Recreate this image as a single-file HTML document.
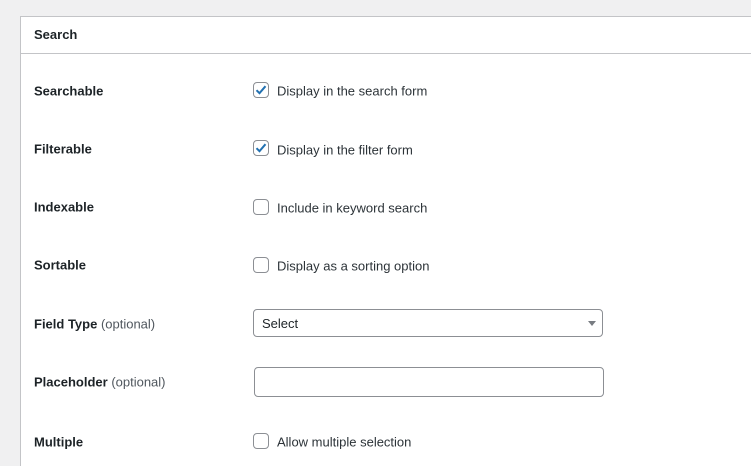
<!DOCTYPE html>
<html style="height:466px;overflow:hidden"><head><style>
body{margin:0;width:751px;height:466px;background:#f0f0f1;font-family:"Liberation Sans",sans-serif;font-size:13px;color:#1d2327;overflow:hidden;position:relative}
.panel{position:absolute;left:20px;top:16px;width:760px;height:460px;background:#fff;border:1px solid #c3c4c7;border-bottom:none}
.hdr{height:37px;border-bottom:1px solid #c3c4c7;box-sizing:border-box;padding-left:13px;line-height:36px;font-weight:bold}
.lab{position:absolute;left:34px;font-weight:bold;transform:translateY(-50%)}
.lab span{font-weight:normal;color:#50575e}
.cb{position:absolute;left:253px;width:14px;height:14px;border:1px solid #8c8f94;border-radius:4px;background:#fff;transform:translateY(-50%)}
.cb svg{position:absolute;left:-1px;top:-1px}
.ct{position:absolute;left:277px;transform:translateY(-50%);color:#2c3338}
.sel{position:absolute;left:253px;top:309px;width:348px;height:26px;border:1px solid #8c8f94;border-radius:4px;line-height:28px}
.inp{position:absolute;left:254px;top:367px;width:348px;height:28px;border:1px solid #8c8f94;border-radius:4px}
</style></head><body>
<div class="panel"><div class="hdr">Search</div></div>
<div class="lab" style="top:91px">Searchable</div>
<div class="cb" style="top:90px"><svg width="16" height="16" viewBox="0 0 16 16"><path d="M3.5 8.2l3 3 6-7" fill="none" stroke="#2271b1" stroke-width="2"/></svg></div>
<div class="ct" style="top:91px">Display in the search form</div>
<div class="lab" style="top:149px">Filterable</div>
<div class="cb" style="top:148px"><svg width="16" height="16" viewBox="0 0 16 16"><path d="M3.5 8.2l3 3 6-7" fill="none" stroke="#2271b1" stroke-width="2"/></svg></div>
<div class="ct" style="top:150px">Display in the filter form</div>
<div class="lab" style="top:207px">Indexable</div>
<div class="cb" style="top:207px"></div>
<div class="ct" style="top:208px">Include in keyword search</div>
<div class="lab" style="top:265px">Sortable</div>
<div class="cb" style="top:265px"></div>
<div class="ct" style="top:266px">Display as a sorting option</div>
<div class="lab" style="top:324px">Field Type <span>(optional)</span></div>
<div class="sel"><span style="margin-left:8px">Select</span><svg style="position:absolute;right:6px;top:11px" width="8" height="5"><path d="M0 0h8L4 5z" fill="#787c82"/></svg></div>
<div class="lab" style="top:382px">Placeholder <span>(optional)</span></div>
<div class="inp"></div>
<div class="lab" style="top:442px">Multiple</div>
<div class="cb" style="top:441px"></div>
<div class="ct" style="top:442px">Allow multiple selection</div>
</body></html>
